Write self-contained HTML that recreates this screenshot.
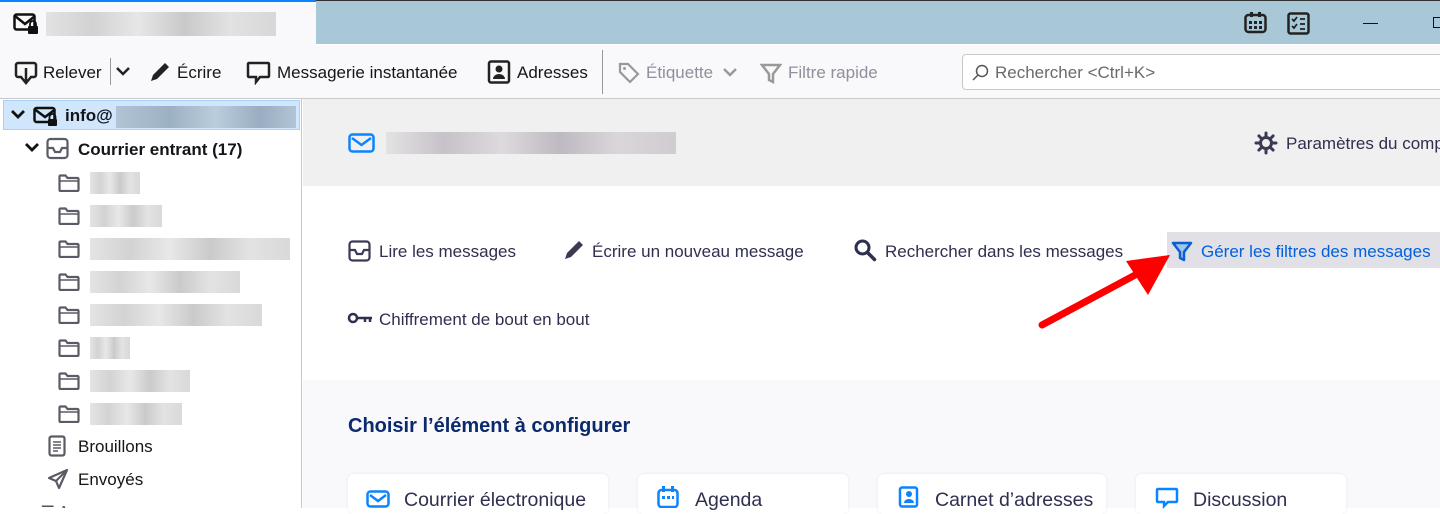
<!DOCTYPE html>
<html><head><meta charset="utf-8"><style>
*{box-sizing:border-box;margin:0;padding:0}
body{width:1440px;height:508px;overflow:hidden;position:relative;font-family:"Liberation Sans",sans-serif;font-size:16px;color:#15141a;background:#fff}
.a{position:absolute;white-space:nowrap}
.blur{position:absolute;background:linear-gradient(90deg,#ddd,#c8c8c8 20%,#e2e2e2 40%,#bdbdbd 60%,#dcdcdc 80%,#cfcfcf);opacity:.8}
svg{position:absolute}
</style></head><body>
<div class="a" style="left:0;top:0;width:1440px;height:44px;background:#a8c8d8;border-top:1px solid #333"></div>
<div class="a" style="left:0;top:0;width:316px;height:45px;background:#f9f9fb;border-top:2px solid #0a84ff"></div>
<svg style="left:13px;top:13px" width="26" height="22" viewBox="0 0 26 22"><rect x="1.5" y="1.5" width="20" height="15" rx="2" fill="none" stroke="#111" stroke-width="2.5"/><path d="M2 3l10 8 10-8" fill="none" stroke="#111" stroke-width="2.5"/><rect x="15" y="13" width="10" height="8" rx="1" fill="#111"/><path d="M17 13v-2a3 3 0 016 0v2" fill="none" stroke="#111" stroke-width="1.8"/></svg>
<div class="blur" style="left:46px;top:12px;width:230px;height:24px"></div>
<svg style="left:1244px;top:12px" width="24" height="22" viewBox="0 0 24 22"><rect x="1.5" y="3" width="20" height="17" rx="3" fill="none" stroke="#222" stroke-width="2.5"/><rect x="6" y="0" width="3" height="5" fill="#222"/><rect x="14" y="0" width="3" height="5" fill="#222"/><g fill="#222"><rect x="5" y="9" width="3" height="3"/><rect x="10" y="9" width="3" height="3"/><rect x="15" y="9" width="3" height="3"/><rect x="5" y="14" width="3" height="3"/><rect x="10" y="14" width="3" height="3"/><rect x="15" y="14" width="3" height="3"/></g></svg>
<svg style="left:1287px;top:12px" width="24" height="24" viewBox="0 0 24 24"><rect x="1.5" y="1.5" width="20" height="20" rx="2" fill="none" stroke="#222" stroke-width="2.5"/><path d="M5 7l2 2 3-4M5 14l2 2 3-4M13 7h5M13 12h5M13 17h5" fill="none" stroke="#222" stroke-width="1.8"/></svg>
<div class="a" style="left:1363px;top:23px;width:15px;height:1px;background:#111"></div>
<div class="a" style="left:1433px;top:17px;width:10px;height:11px;border:1px solid #111"></div>
<div class="a" style="left:0;top:45px;width:1440px;height:54px;background:#f9f9fb;border-bottom:1px solid #c8c8c8"></div>
<svg style="left:14px;top:61px" width="24" height="24" viewBox="0 0 24 24"><path d="M8 16H4a2 2 0 01-2-2V4a2 2 0 012-2h16a2 2 0 012 2v10a2 2 0 01-2 2h-4" fill="none" stroke="#222" stroke-width="2.5"/><path d="M12 7v14M7 16l5 6 5-6" fill="none" stroke="#222" stroke-width="2.5"/></svg>
<div class="a" style="left:43px;top:63px;font-size:17px">Relever</div>
<div class="a" style="left:110px;top:58px;width:1px;height:27px;background:#999"></div>
<svg style="left:115px;top:66px" width="16" height="10" viewBox="0 0 16 10"><path d="M2 2l6 6 6-6" fill="none" stroke="#222" stroke-width="2.5"/></svg>
<svg style="left:149px;top:61px" width="22" height="22" viewBox="0 0 22 22"><path d="M2 20l2-6 12-12 4 4-12 12z" fill="#222"/></svg>
<div class="a" style="left:177px;top:63px;font-size:17px">Écrire</div>
<svg style="left:246px;top:61px" width="25" height="24" viewBox="0 0 25 24"><path d="M3 2h19a1 1 0 011 1v12a1 1 0 01-1 1h-8l-4 5v-5H3a1 1 0 01-1-1V3a1 1 0 011-1z" fill="none" stroke="#222" stroke-width="2.5"/></svg>
<div class="a" style="left:277px;top:63px;font-size:17px">Messagerie instantanée</div>
<svg style="left:487px;top:60px" width="24" height="24" viewBox="0 0 24 24"><rect x="2" y="1.5" width="20" height="21" rx="2" fill="none" stroke="#222" stroke-width="2.5"/><circle cx="12" cy="9" r="3.5" fill="#222"/><path d="M6 19a6 5 0 0112 0z" fill="#222"/></svg>
<div class="a" style="left:517px;top:63px;font-size:17px">Adresses</div>
<div class="a" style="left:602px;top:50px;width:1px;height:44px;background:#999"></div>
<svg style="left:618px;top:62px" width="22" height="22" viewBox="0 0 22 22"><path d="M2 2h8l10 10-8 8L2 10z" fill="none" stroke="#999" stroke-width="2.2"/><circle cx="6.5" cy="6.5" r="1.5" fill="#999"/></svg>
<div class="a" style="left:646px;top:63px;font-size:17px;color:#8f8f9d">Étiquette</div>
<svg style="left:722px;top:67px" width="16" height="10" viewBox="0 0 16 10"><path d="M2 2l6 6 6-6" fill="none" stroke="#999" stroke-width="2.5"/></svg>
<svg style="left:760px;top:62px" width="22" height="22" viewBox="0 0 22 22"><path d="M2 3h18l-7 9v8l-4-2v-6z" fill="none" stroke="#999" stroke-width="2.5"/></svg>
<div class="a" style="left:788px;top:63px;font-size:17px;color:#8f8f9d">Filtre rapide</div>
<div class="a" style="left:962px;top:54px;width:490px;height:36px;background:#fff;border:1px solid #c8c8c8;border-radius:4px"></div>
<svg style="left:972px;top:64px" width="18" height="18" viewBox="0 0 18 18"><circle cx="10" cy="7" r="5.5" fill="none" stroke="#555" stroke-width="1.5"/><path d="M6 11l-5 5" stroke="#555" stroke-width="1.5"/></svg>
<div class="a" style="left:995px;top:63px;font-size:17px;color:#6a6a6a">Rechercher &lt;Ctrl+K&gt;</div>
<div class="a" style="left:0;top:99px;width:302px;height:409px;background:#fff;border-right:1px solid #c8c8c8"></div>
<div class="a" style="left:3px;top:100px;width:297px;height:30px;background:#cfe6fd;border:1px solid #a8d0fb"></div>
<svg style="left:10px;top:109px" width="16" height="12" viewBox="0 0 16 12"><path d="M2 2l6 6 6-6" fill="none" stroke="#111" stroke-width="2.8"/></svg>
<svg style="left:33px;top:105px" width="26" height="22" viewBox="0 0 26 22"><rect x="1.5" y="3" width="20" height="14" rx="2" fill="none" stroke="#111" stroke-width="2.5"/><path d="M2 4.5l10 7.5 10-7.5" fill="none" stroke="#111" stroke-width="2.5"/><rect x="15" y="14" width="9" height="7" rx="1" fill="#111"/><path d="M16.5 14v-2a3 3 0 016 0v2" fill="none" stroke="#111" stroke-width="1.8"/></svg>
<div class="a" style="left:65px;top:106px;font-weight:bold;font-size:17px">info@</div>
<div class="blur" style="left:116px;top:106px;width:180px;height:22px;background:linear-gradient(90deg,#a8bccb,#8fa3b5 30%,#b5c7d5 55%,#8c9fb2 80%,#a9bccc)"></div>
<svg style="left:24px;top:142px" width="16" height="12" viewBox="0 0 16 12"><path d="M2 2l6 6 6-6" fill="none" stroke="#111" stroke-width="2.8"/></svg>
<svg style="left:46px;top:137px" width="24" height="24" viewBox="0 0 24 24"><rect x="1.5" y="2" width="20" height="19" rx="3" fill="none" stroke="#5b5b66" stroke-width="2.2"/><path d="M2 11h5l2 4h5l2-4h5" fill="none" stroke="#5b5b66" stroke-width="2.2"/></svg>
<div class="a" style="left:78px;top:140px;font-weight:bold;font-size:17px">Courrier entrant (17)</div>
<div id="folders"></div>
<svg style="left:48px;top:435px" width="18" height="22" viewBox="0 0 18 22"><rect x="1.5" y="1.5" width="15" height="19" rx="2" fill="none" stroke="#5b5b66" stroke-width="2.2"/><path d="M5 7h8M5 10h8M5 13h8M5 16h5" stroke="#5b5b66" stroke-width="1.5"/></svg>
<div class="a" style="left:78px;top:437px;font-size:17px">Brouillons</div>
<svg style="left:47px;top:468px" width="22" height="22" viewBox="0 0 22 22"><path d="M20 2L2 10l7 3 3 7z" fill="none" stroke="#5b5b66" stroke-width="2.2" stroke-linejoin="round"/><path d="M9 13l11-11" stroke="#5b5b66" stroke-width="2"/></svg>
<div class="a" style="left:78px;top:470px;font-size:17px">Envoyés</div>
<div class="a" style="left:20px;top:502px;width:60px;height:6px;overflow:hidden;color:#555">↓↓ ☰ Archives</div>
<div class="a" style="left:303px;top:99px;width:1137px;height:87px;background:#f0f0f0"></div>
<div class="a" style="left:303px;top:186px;width:1137px;height:194px;background:#fff"></div>
<div class="a" style="left:303px;top:380px;width:1137px;height:128px;background:#f9f9fb"></div>
<svg style="left:348px;top:133px" width="27" height="20" viewBox="0 0 27 20"><rect x="1.5" y="1.5" width="24" height="17" rx="3" fill="none" stroke="#0a84ff" stroke-width="2.5"/><path d="M4 5l9.5 7L23 5" fill="none" stroke="#0a84ff" stroke-width="2.5"/></svg>
<div class="blur" style="left:386px;top:132px;width:290px;height:22px;background:linear-gradient(90deg,#ddd,#b6aeb8 20%,#d5d0d5 40%,#a9a2ad 60%,#d0cbd0 80%,#c2bcc3);opacity:.7"></div>
<svg style="left:1254px;top:131px" width="24" height="24" viewBox="0 0 24 24"><g stroke="#3a3a55" stroke-width="3" stroke-linecap="round"><path d="M12 2v3M12 19v3M2 12h3M19 12h3M4.9 4.9l2.1 2.1M17 17l2.1 2.1M4.9 19.1L7 17M17 7l2.1-2.1"/></g><circle cx="12" cy="12" r="5.5" fill="none" stroke="#3a3a55" stroke-width="3"/></svg>
<div class="a" style="left:1286px;top:134px;font-size:17px;color:#2f2f4f">Paramètres du compte</div>
<svg style="left:348px;top:240px" width="24" height="22" viewBox="0 0 24 22"><rect x="1.5" y="1.5" width="20" height="19" rx="3" fill="none" stroke="#3a3a55" stroke-width="2.2"/><path d="M2 10h5l2 4h5l2-4h5" fill="none" stroke="#3a3a55" stroke-width="2.2"/></svg>
<div class="a" style="left:379px;top:242px;font-size:17px;color:#2f2f4f">Lire les messages</div>
<svg style="left:563px;top:239px" width="22" height="22" viewBox="0 0 22 22"><path d="M2 20l2-6 12-12 4 4-12 12z" fill="#3a3a55"/></svg>
<div class="a" style="left:592px;top:242px;font-size:17px;color:#2f2f4f">Écrire un nouveau message</div>
<svg style="left:853px;top:238px" width="24" height="24" viewBox="0 0 24 24"><circle cx="9.5" cy="9.5" r="6.5" fill="none" stroke="#2f2f4f" stroke-width="3"/><path d="M14.5 14.5l7 7" stroke="#2f2f4f" stroke-width="3.5" stroke-linecap="round"/></svg>
<div class="a" style="left:885px;top:242px;font-size:17px;color:#2f2f4f">Rechercher dans les messages</div>
<div class="a" style="left:1167px;top:232px;width:273px;height:36px;background:#e0e0e6"></div>
<svg style="left:1171px;top:240px" width="22" height="22" viewBox="0 0 22 22"><path d="M2 3h18l-7 9v8l-4-2v-6z" fill="rgba(10,132,255,.3)" stroke="#0a60d0" stroke-width="2.5" stroke-linejoin="round"/></svg>
<div class="a" style="left:1201px;top:242px;font-size:17px;color:#0060df">Gérer les filtres des messages</div>
<svg style="left:347px;top:311px" width="26" height="14" viewBox="0 0 26 14"><circle cx="6" cy="7" r="4" fill="none" stroke="#2f2f4f" stroke-width="2.5"/><path d="M10 7h15M18 7v4M23 7v4" stroke="#2f2f4f" stroke-width="2.5"/></svg>
<div class="a" style="left:379px;top:310px;font-size:17px;color:#2f2f4f">Chiffrement de bout en bout</div>
<svg style="left:1030px;top:245px" width="150" height="90" viewBox="0 0 150 90"><path d="M12 80L120 22" stroke="#f00" stroke-width="7" stroke-linecap="round"/><path d="M140 10L96 16l22 34z" fill="#f00"/></svg>
<div class="a" style="left:348px;top:415px;font-size:20px;font-weight:bold;color:#0b2a6e">Choisir l’élément à configurer</div>
<div class="a" style="left:348px;top:474px;width:260px;height:40px;background:#fff;border-radius:6px;box-shadow:0 0 3px rgba(0,0,0,.08)"></div>
<div class="a" style="left:638px;top:474px;width:210px;height:40px;background:#fff;border-radius:6px;box-shadow:0 0 3px rgba(0,0,0,.08)"></div>
<div class="a" style="left:878px;top:474px;width:228px;height:40px;background:#fff;border-radius:6px;box-shadow:0 0 3px rgba(0,0,0,.08)"></div>
<div class="a" style="left:1136px;top:474px;width:210px;height:40px;background:#fff;border-radius:6px;box-shadow:0 0 3px rgba(0,0,0,.08)"></div>
<svg style="left:366px;top:490px" width="24" height="18" viewBox="0 0 24 18"><rect x="1.5" y="1.5" width="21" height="15" rx="3" fill="none" stroke="#0a84ff" stroke-width="2.5"/><path d="M4 5l8 6 8-6" fill="none" stroke="#0a84ff" stroke-width="2.5"/></svg>
<div class="a" style="left:404px;top:489px;font-size:19.5px;color:#2f2f4f">Courrier électronique</div>
<svg style="left:657px;top:486px" width="22" height="22" viewBox="0 0 22 22"><rect x="1.5" y="4" width="19" height="17" rx="3" fill="none" stroke="#0a84ff" stroke-width="2.5"/><rect x="5" y="0" width="3" height="6" fill="#0a84ff"/><rect x="14" y="0" width="3" height="6" fill="#0a84ff"/><g fill="#0a84ff"><rect x="5" y="10" width="3" height="3"/><rect x="10" y="10" width="3" height="3"/><rect x="15" y="10" width="2" height="3"/></g></svg>
<div class="a" style="left:695px;top:489px;font-size:19.5px;color:#2f2f4f">Agenda</div>
<svg style="left:897px;top:486px" width="22" height="22" viewBox="0 0 22 22"><rect x="3" y="1.5" width="17" height="19" rx="2" fill="none" stroke="#0a84ff" stroke-width="2.5"/><circle cx="12" cy="8" r="3" fill="#0a84ff"/><path d="M7 17a5 4 0 0110 0z" fill="#0a84ff"/></svg>
<div class="a" style="left:935px;top:489px;font-size:19.5px;color:#2f2f4f">Carnet d’adresses</div>
<svg style="left:1155px;top:487px" width="24" height="22" viewBox="0 0 24 22"><path d="M3 2h18a1 1 0 011 1v11a1 1 0 01-1 1h-8l-4 4v-4H3a1 1 0 01-1-1V3a1 1 0 011-1z" fill="none" stroke="#0a84ff" stroke-width="2.5"/></svg>
<div class="a" style="left:1193px;top:489px;font-size:19.5px;color:#2f2f4f">Discussion</div>
<script>
var ws=[50,72,200,150,172,40,100,92],h='';
for(var i=0;i<8;i++){var y=172+i*33;
h+='<svg style="left:58px;top:'+(y+2)+'px" width="22" height="18" viewBox="0 0 22 18"><path d="M1.5 2.5a1 1 0 011-1h5l2 2.5h10a1 1 0 011 1v11a1 1 0 01-1 1h-17a1 1 0 01-1-1z" fill="none" stroke="#5b5b66" stroke-width="2.2"/><path d="M2 7h18" stroke="#5b5b66" stroke-width="1.5"/></svg>';
h+='<div class="blur" style="left:90px;top:'+y+'px;width:'+ws[i]+'px;height:22px"></div>';}
document.getElementById('folders').outerHTML=h;
</script>
</body></html>
